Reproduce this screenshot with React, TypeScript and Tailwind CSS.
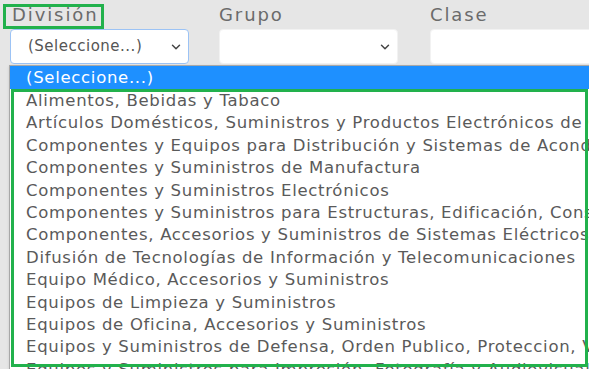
import { ChevronDown } from 'lucide-react';

const OPTIONS = [
  'Alimentos, Bebidas y Tabaco',
  'Artículos Domésticos, Suministros y Productos Electrónicos de Consumo',
  'Componentes y Equipos para Distribución y Sistemas de Acondicionamiento',
  'Componentes y Suministros de Manufactura',
  'Componentes y Suministros Electrónicos',
  'Componentes y Suministros para Estructuras, Edificación, Construcción y Obras Civiles',
  'Componentes, Accesorios y Suministros de Sistemas Eléctricos e Iluminación',
  'Difusión de Tecnologías de Información y Telecomunicaciones',
  'Equipo Médico, Accesorios y Suministros',
  'Equipos de Limpieza y Suministros',
  'Equipos de Oficina, Accesorios y Suministros',
  'Equipos y Suministros de Defensa, Orden Publico, Proteccion, Vigilancia y Seguridad',
  'Equipos y Suministros para Impresión, Fotografía y Audiovisuales',
];

const font = { fontFamily: '"DejaVu Sans", "Noto Sans", sans-serif' };

function Field({
  label,
  value,
  focused,
  boxed,
}: {
  label: string;
  value?: string;
  focused?: boolean;
  boxed?: boolean;
}) {
  return (
    <div className="flex w-[179px] shrink-0 flex-col">
      <div className="relative h-[29px]">
        <span
          className={`absolute top-[3px] text-[18px] leading-[24px] tracking-[1.9px] text-[#6b6b6b] ${
            boxed ? 'left-[2px]' : 'left-0'
          }`}
        >
          {label}
        </span>
        {boxed && (
          <div className="absolute top-[4px] -left-[7px] h-[25px] w-[101px] border-[3px] border-[#22b14c]" />
        )}
      </div>
      <div
        className={`flex h-[35px] items-center justify-between rounded-[4px] bg-white pr-[5px] pl-[17px] ${
          focused ? 'border border-[#9cc3f5]' : 'border border-[#f2f2f2]'
        }`}
      >
        <span className="text-[15px] tracking-[0.5px] text-[#555]">{value}</span>
        <ChevronDown className="h-[14px] w-[14px] text-[#444]" strokeWidth={2.5} />
      </div>
    </div>
  );
}

export default function App() {
  return (
    <div className="relative h-[369px] w-[589px] overflow-hidden bg-[#e6e6e6]" style={font}>
      <div className="flex gap-[30px] pl-[10px]">
        <Field label="División" value="(Seleccione...)" focused boxed />
        <Field label="Grupo" />
        <div className="ml-[2px]">
          <Field label="Clase" />
        </div>
      </div>

      <div className="absolute top-[65px] left-[9px] w-[620px] border border-[#a8a8a8] bg-white shadow-sm">
        <div className="h-[23px] bg-[#1e90ff] pl-[16px] text-[16.5px] leading-[24px] tracking-[0.7px] text-white">
          (Seleccione...)
        </div>
        <div className="pt-[1px]">
          {OPTIONS.map((option) => (
            <div
              key={option}
              className="h-[22.4px] pl-[16px] text-[16.5px] leading-[22.4px] tracking-[0.7px] whitespace-nowrap text-[#5a5a5a]"
            >
              {option}
            </div>
          ))}
        </div>
      </div>

      <div className="absolute top-[89px] left-[11px] h-[278px] w-[577px] border-[3px] border-[#22b14c]" />
    </div>
  );
}
